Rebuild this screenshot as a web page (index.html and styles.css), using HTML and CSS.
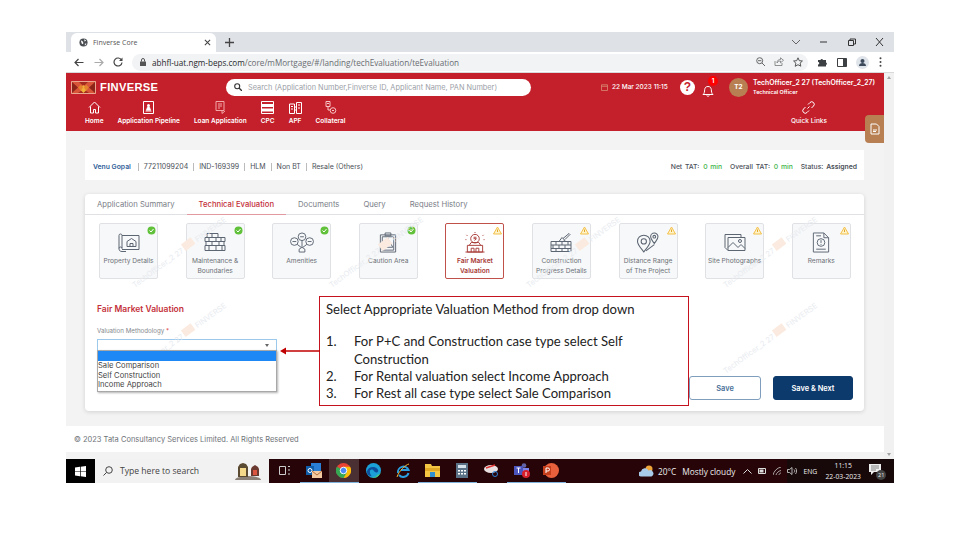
FILE: index.html
```html
<!DOCTYPE html>
<html lang="en">
<head>
  <meta charset="UTF-8">
  <title>Finverse Core</title>
  <link rel="stylesheet" href="styles.css">
</head>
<body>
<div class="shot">

  <!-- browser tabs -->
  <div class="tabstrip">
    <div class="tab">
      <svg class="globe" width="9" height="9" viewBox="0 0 10 10"><circle cx="5" cy="5" r="4.5" fill="#4a4d52"/><path d="M2 2.5l2 1 1 2-1 1.500-1-1zM6 1l2 2-2 1zM6.500 6l2 .5-2 2z" fill="#fff"/></svg>
      <span class="tab-title">Finverse Core</span>
      <svg width="7" height="7" viewBox="0 0 8 8"><path d="M1 1l6 6M7 1L1 7" stroke="#444" stroke-width="1.200"/></svg>
    </div>
    <svg class="plus" width="9" height="9" viewBox="0 0 9 9"><path d="M4.500 0v9M0 4.500h9" stroke="#444" stroke-width="1.300"/></svg>
    <div class="win-btns">
      <svg width="10" height="8" viewBox="0 0 10 8"><path d="M1 2l4 4 4-4" fill="none" stroke="#666"/></svg>
      <svg width="10" height="8" viewBox="0 0 10 8"><path d="M1 4h7" stroke="#333"/></svg>
      <svg width="10" height="8" viewBox="0 0 10 8"><path d="M1.500 2.500h5v5h-5zM3 2.500V1h5.500v5H6.500" fill="none" stroke="#333"/></svg>
      <svg width="10" height="8" viewBox="0 0 10 8"><path d="M1 0l7 8M8 0L1 8" stroke="#333"/></svg>
    </div>
  </div>

  <!-- browser toolbar -->
  <div class="toolbar">
    <svg class="nav-back" width="10" height="9" viewBox="0 0 10 9"><path d="M9.500 4.500H1M4.500 1L1 4.500 4.500 8" fill="none" stroke="#444" stroke-width="1.200"/></svg>
    <svg class="nav-fwd" width="10" height="9" viewBox="0 0 10 9"><path d="M.5 4.500H9M5.500 1L9 4.500 5.500 8" fill="none" stroke="#aaa" stroke-width="1.200"/></svg>
    <svg class="nav-reload" width="10" height="10" viewBox="0 0 10 10"><path d="M8.500 3A4 4 0 1 0 9 5.500" fill="none" stroke="#444" stroke-width="1.200"/><path d="M9.500 .5v3.500H6z" fill="#444"/></svg>
    <div class="urlbar">
      <svg width="6" height="8" viewBox="0 0 6 8"><path d="M0 3.500h6V8H0z" fill="#555"/><path d="M1.500 3.500V2a1.500 1.500 0 0 1 3 0v1.500" fill="none" stroke="#555"/></svg>
      <span class="url"><b>abhfl-uat.ngm-beps.com</b>/core/mMortgage/#/landing/techEvaluation/teEvaluation</span>
      <div class="url-icons">
        <svg width="9" height="9" viewBox="0 0 9 9"><circle cx="3.700" cy="3.700" r="3" fill="none" stroke="#666"/><path d="M6 6l3 3M2 3.700h3.400" stroke="#666"/></svg>
        <svg width="10" height="9" viewBox="0 0 10 9"><path d="M1 4v4.500h7V6M3 6c0-3 2-3.500 3.500-3.500V.8L9.500 3.300 6.500 5.800V4C5 4 3.800 4.500 3 6z" fill="none" stroke="#777" stroke-width=".8"/></svg>
        <svg width="10" height="10" viewBox="0 0 10 10"><path d="M5 .8l1.300 2.900 3.100.3-2.300 2.100.7 3.100L5 7.700 2.200 9.300l.7-3.100L.6 4l3.100-.3z" fill="none" stroke="#555"/></svg>
      </div>
    </div>
    <div class="ext-icons">
      <svg width="10" height="10" viewBox="0 0 10 10"><path d="M1 3h2.500a1.300 1.300 0 0 1 2.500 0H9v2.500a1.300 1.300 0 0 1 0 2.500V9.500H1V7.500a1.200 1.200 0 0 0 0-2.500z" fill="#3c4043"/></svg>
      <svg width="10" height="9" viewBox="0 0 10 9"><path d="M.5.500h9v8h-9z" fill="none" stroke="#3c4043"/><path d="M6 .5h3.500v8H6z" fill="#3c4043"/></svg>
      <svg width="13" height="13" viewBox="0 0 13 13"><circle cx="6.500" cy="6.500" r="6.500" fill="#dfe3ea"/><circle cx="6.500" cy="5" r="2" fill="#3c4a5c"/><path d="M3 10c0-2 1.500-3 3.500-3s3.500 1 3.500 3z" fill="#3c4a5c"/></svg>
      <svg width="3" height="10" viewBox="0 0 3 10"><circle cx="1.500" cy="1.300" r="1" fill="#444"/><circle cx="1.500" cy="5" r="1" fill="#444"/><circle cx="1.500" cy="8.700" r="1" fill="#444"/></svg>
    </div>
  </div>

  <div class="viewport">
    <div class="app">

      <header class="topbar">
        <div class="top-row">
          <svg class="logo" width="25" height="13" viewBox="0 0 25 13"><path d="M0 0h25v13H0z" fill="#d8553a"/><path d="M1 1l6 5.500L1 12zM24 1l-6 5.500 6 5.500z" fill="#8c2419"/><path d="M12.500 5L8 1h9zM12.500 8L7 12h11z" fill="#a32a1c"/><path d="M12.500 4l4 4-4 4-4-4z" fill="#f0b03a"/><path d="M7 6.500l3-3 2 3-2 3zM18 6.500l-3-3-2 3 2 3z" fill="#e5822d"/><path d="M.5.500h24v12H.5z" fill="none" stroke="#e9a58e"/></svg>
          <span class="brand">FINVERSE</span>
          <div class="search">
            <svg width="8" height="8" viewBox="0 0 8 8"><circle cx="3.200" cy="3.200" r="2.500" fill="none" stroke="#333" stroke-width="1.100"/><path d="M5 5l3 3" stroke="#333" stroke-width="1.300"/></svg>
            <span>Search (Application Number,Finverse ID, Applicant Name, PAN Number)</span>
          </div>
          <div class="top-right">
            <svg class="cal" width="7" height="7" viewBox="0 0 7 7"><path d="M.5.800h6v5.700h-6zM.5 2.300h6" fill="none" stroke="#d98a74" stroke-width=".8"/></svg>
            <span class="date">22 Mar 2023 11:15</span>
            <span class="help">?</span>
            <div class="bell">
              <svg width="12" height="13" viewBox="0 0 12 13"><path d="M1 10.500c1.500-1 1.500-3 1.700-5C3 3.500 4 2.500 6 2.500s3 1 3.300 3c.2 2 .2 4 1.700 5zM4.800 11.500a1.300 1.300 0 0 0 2.400 0" fill="none" stroke="#fff"/></svg>
              <span class="badge">1</span>
            </div>
            <span class="avatar">T2</span>
            <div class="user">
              <div class="user-name">TechOfficer_2 27 (TechOfficer_2_27)</div>
              <div class="user-role">Technical Officer</div>
            </div>
          </div>
        </div>
        <nav class="menu">
          <a class="menu-item">
            <svg width="13" height="13" viewBox="0 0 13 13"><path d="M1 6.500L6.500 1 12 6.500M2.500 5.500V12h3V8.500h2V12h3V5.500" fill="none" stroke="#fff"/></svg>
            Home
          </a>
          <a class="menu-item">
            <svg width="11" height="13" viewBox="0 0 11 13"><path d="M.5.500h10v12H.5z" fill="none" stroke="#fff"/><circle cx="5.500" cy="4.500" r="1.500" fill="#fff"/><path d="M3 9.500L4.500 6h2L8 9.500zM2.500 10.500h6" fill="#fff" stroke="#fff" stroke-width=".5"/></svg>
            Application Pipeline
          </a>
          <a class="menu-item">
            <svg width="11" height="13" viewBox="0 0 11 13"><path d="M1 .5h8v9H1zM3 3h4M3 5h4M3 7h2M7 9.500v3l3-2.500" fill="none" stroke="#f0a8a8"/></svg>
            Loan Application
          </a>
          <a class="menu-item">
            <svg width="13" height="13" viewBox="0 0 13 13"><path d="M.5.500h12v12H.5z" fill="none" stroke="#fff"/><path d="M.5 3h12v3H.5zM.5 7.500h12v3H.5z" fill="#fff"/></svg>
            CPC
          </a>
          <a class="menu-item">
            <svg width="13" height="13" viewBox="0 0 13 13"><path d="M.5 3h5v9.500h-5zM7.500 1.500h5v11h-5zM5.500 6h2M5.500 9h2M2 5.500h2M2 8h2M9 4h2M9 7h2" fill="none" stroke="#fff"/></svg>
            APF
          </a>
          <a class="menu-item">
            <svg width="13" height="13" viewBox="0 0 13 13"><path d="M2 .5h4v5H2zM3 2.500h2M4 5.500V9h2" fill="none" stroke="#f6c6c6"/><circle cx="9" cy="9.500" r="2.800" fill="none" stroke="#f6c6c6"/><path d="M8 9.500h2" stroke="#f6c6c6"/></svg>
            Collateral
          </a>
          <a class="menu-item quick">
            <svg width="13" height="13" viewBox="0 0 13 13"><path d="M5.500 7.500l2-2M6 3.500L8 1.500a2.400 2.400 0 0 1 3.500 3.500l-2 2M7 9.500L5 11.500A2.400 2.400 0 0 1 1.500 8l2-2" fill="none" stroke="#fff"/></svg>
            Quick Links
          </a>
        </nav>
      </header>

      <main class="content">
        <section class="summary">
          <div class="crumbs">
            <b>Venu Gopal</b><span>77211099204</span><span>IND-169399</span><span>HLM</span><span>Non BT</span><span>Resale (Others)</span>
          </div>
          <div class="tat">
            Net TAT: <em>0 min</em> Overall TAT: <em>0 min</em> Status: <strong>Assigned</strong>
          </div>
        </section>

        <section class="card">
          <div class="tabs">
            <a>Application Summary</a>
            <a class="on">Technical Evaluation</a>
            <a>Documents</a>
            <a>Query</a>
            <a>Request History</a>
          </div>

          <div class="tiles">
            <div class="tile">
              <svg class="done" viewBox="0 0 9 9"><circle cx="4.500" cy="4.500" r="4" fill="#62c13a"/><path d="M2.500 4.500l1.500 1.500 2.500-3" fill="none" stroke="#fff"/></svg>
              <svg class="tile-ico" viewBox="0 0 22 20"><path d="M1 3a1.500 1.500 0 0 1 3 0v13a1.500 1.500 0 0 0-3 0zM4 3h17v14H4M1 16c0 2 1 3 3 3h4" fill="none"/><path d="M9 14V9l4.500-3L18 9v5zM12 14v-3h3v3" fill="none"/></svg>
              <span>Property Details</span>
            </div>
            <div class="tile">
              <svg class="done" viewBox="0 0 9 9"><circle cx="4.500" cy="4.500" r="4" fill="#62c13a"/><path d="M2.500 4.500l1.500 1.500 2.500-3" fill="none" stroke="#fff"/></svg>
              <svg class="tile-ico" viewBox="0 0 22 20"><path d="M3 1h11v4h7v4h-1v4h1v5H1v-5h1V9H1V5h2zM1 5h13M1 9h20M1 13h20M8 1v4M5 5v4M12 5v4M17 5v4M8 9v4M15 9v4M5 13v5M12 13v5M18 13v5" fill="none"/></svg>
              <span>Maintenance &amp; Boundaries</span>
            </div>
            <div class="tile">
              <svg class="done" viewBox="0 0 9 9"><circle cx="4.500" cy="4.500" r="4" fill="#62c13a"/><path d="M2.500 4.500l1.500 1.500 2.500-3" fill="none" stroke="#fff"/></svg>
              <svg class="tile-ico wide" viewBox="0 0 26 22"><circle cx="5" cy="10" r="4"/><circle cx="13" cy="5" r="4"/><circle cx="21" cy="10" r="4"/><path d="M3 10h4M11 5h4M19 10h4M8 13l4 3M13 9v7M18 13l-4 3M10 21v-3l3-2 3 2v3z"/></svg>
              <span>Amenities</span>
            </div>
            <div class="tile">
              <svg class="done" viewBox="0 0 9 9"><circle cx="4.500" cy="4.500" r="4" fill="#62c13a"/><path d="M2.500 4.500l1.500 1.500 2.500-3" fill="none" stroke="#fff"/></svg>
              <svg class="tile-ico" viewBox="0 0 22 22"><path d="M3 3h16v18H3zM8 1h6v3H8zM5 5h12v14H5zM11 7l5 9H6zM11 10.500v3"/></svg>
              <span>Caution Area</span>
            </div>
            <div class="tile active">
              <svg class="warn" viewBox="0 0 9 9"><path d="M4.500 1L8.500 8h-8z" fill="#fff3c9" stroke="#f3c14b"/><path d="M4.500 3.500V6" stroke="#e2a82c"/></svg>
              <svg class="tile-ico red" viewBox="0 0 22 22"><circle cx="11" cy="7" r="4.500"/><path d="M9.500 5.500h3M9.500 7h3M10.500 9l2-2M3 21v-7h16v7zM1 21h20M5 14l2-3h8l2 3M7 21v-4h3v4M12 21v-4h3v4M2 3l1 1M20 3l-1 1M11 0v1M1 8h1M20 8h1"/></svg>
              <span>Fair Market Valuation</span>
            </div>
            <div class="tile">
              <svg class="warn" viewBox="0 0 9 9"><path d="M4.500 1L8.500 8h-8z" fill="#fff3c9" stroke="#f3c14b"/><path d="M4.500 3.500V6" stroke="#e2a82c"/></svg>
              <svg class="tile-ico" viewBox="0 0 22 20"><path d="M1 9h20v10H1zM1 12.500h20M1 16h20M6 9v3.500M12 9v3.500M18 9v3.500M3 12.500V16M9 12.500V16M15 12.500V16M6 16v3M12 16v3M18 16v3M9 9l3-4 3 3-2 1M13 6l6-5 1 1-5 5" fill="none"/></svg>
              <span>Construction Progress Details</span>
            </div>
            <div class="tile">
              <svg class="warn" viewBox="0 0 9 9"><path d="M4.500 1L8.500 8h-8z" fill="#fff3c9" stroke="#f3c14b"/><path d="M4.500 3.500V6" stroke="#e2a82c"/></svg>
              <svg class="tile-ico wide" viewBox="0 0 24 20"><path d="M8 19c-3-4-6-7-6-10a6 6 0 0 1 12 0c0 3-3 6-6 10z"/><circle cx="8" cy="9" r="2.500"/><path d="M18 11c-2-3-3.500-4.500-3.500-6.500a3.500 3.500 0 0 1 7 0c0 2-1.500 3.500-3.500 6.500zM10 18l8-6"/><circle cx="18" cy="4.500" r="1.300"/></svg>
              <span>Distance Range of The Project</span>
            </div>
            <div class="tile">
              <svg class="warn" viewBox="0 0 9 9"><path d="M4.500 1L8.500 8h-8z" fill="#fff3c9" stroke="#f3c14b"/><path d="M4.500 3.500V6" stroke="#e2a82c"/></svg>
              <svg class="tile-ico" viewBox="0 0 22 20"><path d="M1 2h16v3M1 2v13l3 3M4 5h17v13H4zM4 15l5-5 5 5 3-3 4 4"/><circle cx="16" cy="8.500" r="1.500"/></svg>
              <span>Site Photographs</span>
            </div>
            <div class="tile">
              <svg class="warn" viewBox="0 0 9 9"><path d="M4.500 1L8.500 8h-8z" fill="#fff3c9" stroke="#f3c14b"/><path d="M4.500 3.500V6" stroke="#e2a82c"/></svg>
              <svg class="tile-ico" viewBox="0 0 20 22"><path d="M2 1h11l5 5v15H2zM13 1v5h5M5 4h5M5 18h10"/><circle cx="10" cy="11" r="4"/><path d="M10 8.500v3M10 12.500v1"/></svg>
              <span>Remarks</span>
            </div>
          </div>

          <div class="form">
            <div class="form-left">
              <h3>Fair Market Valuation</h3>
              <label>Valuation Methodology <i>*</i></label>
              <div class="select"><span class="caret"></span></div>
            </div>
            <div class="actions">
              <button type="button" class="btn">Save</button>
              <button type="button" class="btn primary">Save &amp; Next</button>
            </div>
          </div>

          <div class="wm-layer">
            <span class="wm">TechOfficer_2 27 <u></u> FINVERSE</span>
            <span class="wm">TechOfficer_2 27 <u></u> FINVERSE</span>
            <span class="wm">TechOfficer_2 27 <u></u> FINVERSE</span>
            <span class="wm">TechOfficer_2 27 <u></u> FINVERSE</span>
            <span class="wm">TechOfficer_2 27 <u></u> FINVERSE</span>
            <span class="wm">TechOfficer_2 27 <u></u> FINVERSE</span>
            <span class="wm">TechOfficer_2 27 <u></u> FINVERSE</span>
            <span class="wm">TechOfficer_2 27 <u></u> FINVERSE</span>
          </div>

          <!-- list of the open select -->
          <ul class="options">
            <li class="picked"></li>
            <li>Sale Comparison</li>
            <li>Self Construction</li>
            <li>Income Approach</li>
          </ul>
        </section>
      </main>

      <footer class="page-foot">© 2023 Tata Consultancy Services Limited. All Rights Reserved</footer>
    </div>

    <div class="scrollbar"><i class="up"></i><i class="down"></i></div>

    <div class="side-tab">
      <svg width="10" height="12" viewBox="0 0 10 12"><path d="M1 1h5.500L9 3.500V11H1zM3 7h4M3 8.500h3" fill="none" stroke="#fff"/></svg>
    </div>
  </div>

  <!-- windows taskbar -->
  <div class="taskbar">
    <div class="start">
      <svg width="11" height="11" viewBox="0 0 11 11"><path d="M0 1.500L5 .8v4.400H0zM5.700.7L11 0v5.200H5.700zM0 5.800h5v4.400l-5-.7zM5.700 5.800H11V11l-5.300-.7z" fill="#fff"/></svg>
    </div>
    <div class="tb-search">
      <svg width="10" height="10" viewBox="0 0 10 10"><circle cx="6" cy="4" r="3.300" fill="none" stroke="#444"/><path d="M3.500 6.500L.5 9.500" stroke="#444"/></svg>
      <span>Type here to search</span>
      <svg class="lanterns" width="26" height="17" viewBox="0 0 26 17"><ellipse cx="13" cy="17" rx="13" ry="4" fill="#8a8078"/><path d="M5 1l3-1 3 1 2 3v10H3V4z" fill="#5b4a32"/><path d="M5 5h6v8H5z" fill="#f5d98a"/><path d="M17 4l3-2 3 2 1 2v7h-8V6z" fill="#6a3a30"/><path d="M18 7h4v5h-4z" fill="#d9553f"/></svg>
    </div>
    <div class="tb-apps">
      <div class="app-slot">
        <svg width="11" height="9" viewBox="0 0 11 9"><path d="M.5.500h6v8h-6zM9 .5h2M9 4h2M9 8h2" fill="none" stroke="#ccc"/></svg>
      </div>
      <div class="app-slot open">
        <svg width="16" height="15" viewBox="0 0 16 15"><path d="M5 0h10v8H5z" fill="#2a7fd5"/><path d="M0 3h8v9H0z" fill="#0f5ca8"/><circle cx="4" cy="7.500" r="2" fill="none" stroke="#fff"/><path d="M6 8h10v7H6z" fill="#f4c9a0"/><path d="M6 8l5 4 5-4" fill="none" stroke="#b5703e"/></svg>
      </div>
      <div class="app-slot open current">
        <svg width="15" height="15" viewBox="0 0 16 16"><circle cx="8" cy="8" r="8" fill="#ea4335"/><path d="M8 16a8 8 0 0 0 7-12H8z" fill="#fbbc05"/><path d="M1 4a8 8 0 0 0 7 12l3.500-6L5 6z" fill="#34a853"/><circle cx="8" cy="8" r="3.500" fill="#4a8af4" stroke="#fff"/></svg>
      </div>
      <div class="app-slot">
        <svg width="15" height="15" viewBox="0 0 16 16"><circle cx="8" cy="8" r="8" fill="#1ba0d8"/><path d="M1 9c1-5 8-6 11-3 2 2 1 4-1 4-3 0-2-3-5-3-2 0-3 3 0 7-3 0-5-2-5-5z" fill="#0d4f9c"/><path d="M16 9a8 8 0 0 1-10 6.500c4 0 6-2 6-3 2 .5 3-1.500 4-3.500z" fill="#4fd26a"/></svg>
      </div>
      <div class="app-slot">
        <svg width="14" height="15" viewBox="0 0 14 15"><path d="M2 10a5.500 5.500 0 0 1 10.500-3H5" fill="none" stroke="#2a9fe0" stroke-width="2"/><path d="M12.500 10a5.500 5.500 0 0 1-9.500 2" fill="none" stroke="#2a9fe0" stroke-width="2"/><path d="M1 14C3 8 9 2 13 1" fill="none" stroke="#f2b632"/></svg>
      </div>
      <div class="app-slot open">
        <svg width="15" height="13" viewBox="0 0 15 13"><path d="M0 0h6l1 2h8v11H0z" fill="#f4c542"/><path d="M0 4h15v3H0z" fill="#e0a825"/><path d="M5 8h5v5H5z" fill="#2f8fd0"/></svg>
      </div>
      <div class="app-slot open">
        <svg width="12" height="15" viewBox="0 0 12 15"><path d="M0 0h12v15H0z" fill="#5b7286"/><path d="M2 2h8v3H2z" fill="#d5e2ec"/><path d="M2 7h2v1.500H2zM5 7h2v1.500H5zM8 7h2v1.500H8zM2 10h2v1.500H2zM5 10h2v1.500H5zM8 10h2v1.500H8z" fill="#fff"/></svg>
      </div>
      <div class="app-slot">
        <svg width="15" height="13" viewBox="0 0 15 13"><ellipse cx="7" cy="5" rx="7" ry="4" fill="#e8e0e0"/><path d="M2 4l9-3" stroke="#d33" stroke-width="1.500"/><circle cx="11" cy="10" r="2.500" fill="none" stroke="#2a7fd5"/></svg>
      </div>
      <div class="app-slot open">
        <svg width="16" height="15" viewBox="0 0 16 15"><circle cx="10" cy="2.500" r="2.300" fill="#6264a7"/><path d="M6 5h9v6H6z" fill="#7b83eb"/><path d="M0 3h9v9H0z" fill="#4b53bc"/><path d="M2.500 5h4M4.500 5v5" stroke="#fff"/><circle cx="12" cy="11" r="4" fill="#d61f2b"/><path d="M12 9v4" stroke="#fff"/></svg>
      </div>
      <div class="app-slot open">
        <svg width="16" height="15" viewBox="0 0 16 15"><circle cx="8.500" cy="7.500" r="7.500" fill="#e8603c"/><path d="M0 3h8v9H0z" fill="#c43e1c"/><path d="M3 10V5h2a1.300 1.300 0 0 1 0 3H3" fill="none" stroke="#fff"/></svg>
      </div>
    </div>
    <div class="tb-weather">
      <svg width="15" height="12" viewBox="0 0 15 12"><circle cx="10" cy="4" r="3.500" fill="#eea63a"/><path d="M2 11.500a2.500 2.500 0 0 1 0-5 4 4 0 0 1 7.500-1 3 3 0 0 1 3 6z" fill="#a9cbea"/></svg>
      <span class="temp">20°C</span>
      <span>Mostly cloudy</span>
    </div>
    <div class="tray">
      <svg width="9" height="5" viewBox="0 0 9 5"><path d="M.5 4.500l4-4 4 4" fill="none" stroke="#ddd"/></svg>
      <svg width="9" height="6" viewBox="0 0 9 6"><path d="M.5.500h7v5h-7z" fill="none" stroke="#ddd"/><path d="M1.500 1.500h4v3h-4z" fill="#ddd"/></svg>
      <svg width="9" height="8" viewBox="0 0 9 8"><path d="M0 8C1 4 4 1 8 0M3 8c.5-2 2.500-4 5-4.500M6 8c0-1 1-2 2-2" fill="none" stroke="#ccc" stroke-width=".8"/></svg>
    </div>
    <div class="tray-end">
      <svg width="10" height="8" viewBox="0 0 10 8"><path d="M.5 2.500h2L5 .5v7L2.500 5.500h-2zM7 2.500c1 1 1 2 0 3M8.500 1c1.500 2 1.500 4 0 6" fill="none" stroke="#ddd" stroke-width=".8"/></svg>
      <span class="lang">ENG</span>
      <div class="clock"><div>11:15</div><div>22-03-2023</div></div>
      <div class="notif">
        <svg width="13" height="12" viewBox="0 0 13 12"><path d="M0 0h12v8H5L2 11V8H0z" fill="#eee"/><path d="M2 2h8M2 4h8M2 6h5" stroke="#555" stroke-width=".7"/></svg>
        <span>21</span>
      </div>
    </div>
  </div>
</div>

<!-- note pasted over the screenshot -->
<div class="note">
  <p>Select Appropriate Valuation Method from drop down</p>
  <ol>
    <li><span>1.</span><span>For P+C and Construction case type select Self Construction</span></li>
    <li><span>2.</span><span>For Rental valuation select Income Approach</span></li>
    <li><span>3.</span><span>For Rest all case type select Sale Comparison</span></li>
  </ol>
</div>
<svg class="note-arrow" width="40" height="8" viewBox="0 0 40 8"><path d="M5 4h35" stroke="#c00000" stroke-width="1.500"/><path d="M0 4l6-3.500v7z" fill="#c00000"/></svg>
</body>
</html>
```

FILE: styles.css
```css
* { box-sizing: border-box; }
html, body { margin: 0; height: 100%; }
body { background: #fff; font-family: "Inter", "Liberation Sans", sans-serif; overflow: hidden; position: relative; }

.shot { width: 828px; height: 451px; margin: 32px 0 0 66px; display: flex; flex-direction: column; }

/* browser */
.tabstrip { height: 20px; background: #dee1e6; display: flex; align-items: flex-end; padding-left: 5px; }
.tab { width: 145px; height: 19px; background: #fff; border-radius: 6px 6px 0 0; display: flex; align-items: center; padding: 0 5px 0 8px; }
.tab-title { flex: 1; margin-left: 5px; font: 7px "Open Sans", sans-serif; color: #555; }
.plus { margin: 0 0 5px 9px; }
.win-btns { margin-left: auto; height: 19px; width: 103px; padding: 0 9px 2px 0; display: flex; align-items: center; justify-content: space-between; }

.toolbar { height: 21px; background: #fff; display: flex; align-items: center; border-bottom: 1px solid #d9d9d9; }
.nav-back { margin-left: 8px; }
.nav-fwd { margin-left: 10px; }
.nav-reload { margin-left: 9px; }
.urlbar { width: 676px; height: 17px; margin-left: 9px; background: #f1f3f4; border-radius: 9px; display: flex; align-items: center; padding: 0 5px 0 8px; }
.url { margin-left: 6px; font: 8.15px "Open Sans", sans-serif; color: #6a6d72; white-space: nowrap; }
.url b { font-weight: 400; color: #26282b; }
.url-icons { margin-left: auto; width: 47px; display: flex; justify-content: space-between; }
.ext-icons { flex: 1; display: flex; align-items: center; justify-content: space-between; padding: 0 12px 0 9px; }

.viewport { flex: 1; display: flex; position: relative; min-height: 0; }
.app { width: 818px; flex: none; display: flex; flex-direction: column; background: #f3f3f3; }

/* app header */
.topbar { height: 58px; background: #c4202b; color: #fff; display: flex; flex-direction: column; }
.top-row { display: flex; align-items: center; height: 28px; padding: 0 8px 0 5px; }
.logo { flex: none; }
.brand { margin-left: 4px; font: 700 11.2px "Liberation Sans", sans-serif; letter-spacing: .3px; width: 126px; }
.search { width: 305px; height: 17px; background: #fff; border-radius: 9px; display: flex; align-items: center; padding: 0 8px; font-size: 7.35px; color: #9a9ea6; white-space: nowrap; }
.search span { margin-left: 6px; }
.top-right { flex: 1; display: flex; align-items: center; padding-left: 70px; }
.date { margin-left: 4px; font-size: 6.5px; font-weight: 500; width: 68px; white-space: nowrap; }
.help { width: 15px; height: 15px; border-radius: 50%; background: #fff; color: #c4202b; font: 700 12px/15px "Liberation Sans", sans-serif; text-align: center; }
.bell { position: relative; margin-left: 7px; width: 13px; height: 13px; }
.badge { position: absolute; left: 6px; top: -5px; width: 10px; height: 10px; border-radius: 50%; background: #f00; font: 700 6px/10px "Inter", sans-serif; text-align: center; }
.avatar { margin-left: 14px; flex: none; width: 19px; height: 19px; border-radius: 50%; background: #b87f52; font: 700 6.5px/19px "Inter", sans-serif; text-align: center; }
.user { margin-left: 5px; white-space: nowrap; }
.user-name { font-size: 6.9px; font-weight: 600; line-height: 9px; }
.user-role { font-size: 5.4px; font-weight: 600; line-height: 10px; }

.menu { display: flex; gap: 14px; padding-left: 19px; }
.menu-item { display: flex; flex-direction: column; align-items: center; gap: 3px; font-size: 6.5px; font-weight: 600; white-space: nowrap; }
.menu-item.quick { margin-left: auto; margin-right: 57px; font-weight: 500; }

/* page */
.content { flex: 1; padding: 19px 20px 15px 19px; display: flex; flex-direction: column; gap: 14px; }
.summary { height: 30px; background: #fff; display: flex; align-items: center; justify-content: space-between; padding: 3px 7px 0 8px; font-size: 7px; color: #4a4f57; white-space: nowrap; }
.crumbs { display: flex; align-items: center; }
.crumbs b { color: #2f6098; font-weight: 600; padding-right: 7px; font-size: 6.8px; }
.crumbs span { border-left: 1px solid #bbb; padding: 0 5px; line-height: 8px; }
.tat { font-size: 6.8px; font-weight: 500; word-spacing: 1px; }
.tat em { font-style: normal; color: #3fb54a; margin: 0 5px 0 1px; }
.tat strong { font-weight: 600; }

.card { flex: 1; background: #fff; border-radius: 4px; box-shadow: 0 1px 4px rgba(0,0,0,.14); position: relative; overflow: hidden; display: flex; flex-direction: column; }
.tabs { height: 21px; border-bottom: 1px solid #dfe1e4; display: flex; font-size: 7.7px; color: #7b8087; white-space: nowrap; }
.tabs a { padding: 6px 12px 0; }
.tabs a.on { color: #c4303a; font-weight: 500; border-bottom: 1px solid #e29aa0; height: 21px; }

.tiles { display: flex; gap: 27.6px; padding: 8px 0 0 14px; }
.tile { position: relative; flex: none; width: 59px; height: 56px; background: #f7f8f9; border: 1px solid #dfe1e4; border-radius: 2px; display: flex; flex-direction: column; align-items: center; padding: 8px 0 0; font-size: 6.6px; line-height: 10px; color: #6c7178; text-align: center; }
.tile span { display: block; margin-top: 3px; padding: 0 1px; }
.tile.active { border-color: #c0504a; background: #fff; color: #a83c38; font-weight: 600; }
.tile-ico { width: 22px; height: 21px; flex: none; fill: none; stroke: #5c6673; stroke-width: 1; }
.tile-ico.wide { width: 26px; }
.tile-ico.red { stroke: #a83c38; }
.done, .warn { position: absolute; top: 2px; right: 1px; width: 9px; height: 9px; }

.form { flex: 1; display: flex; justify-content: space-between; padding: 0 11px 0 12px; }
.form-left { width: 180px; padding-top: 24px; }
h3 { margin: 0; font-size: 8.5px; line-height: 12px; font-weight: 600; color: #c4303a; }
label { display: block; margin-top: 12px; font-size: 6.2px; line-height: 8px; color: #83878d; }
label i { color: #d33; font-style: normal; }
.select { position: relative; height: 12px; margin-top: 4px; border: 1px solid #9cc8ec; background: #fff; }
.caret { position: absolute; right: 7px; top: 4px; border: 2px solid transparent; border-top: 3px solid #666; }
.actions { display: flex; gap: 12px; align-items: flex-end; padding-bottom: 11px; }
.btn { width: 72px; height: 24px; border: 1px solid #7f9ebd; border-radius: 3px; background: #fff; color: #4a6f98; font: 600 7.4px "Inter", sans-serif; }
.btn.primary { width: 80px; background: #0d3a6c; border-color: #0d3a6c; color: #fff; }

.options { position: absolute; z-index: 2; left: 12px; top: 156px; width: 180px; margin: 0; padding: 0 0 1px; list-style: none; background: #fff; border: 1px solid #a8a8a8; box-shadow: 1px 1px 2px rgba(0,0,0,.3); font-size: 7.6px; line-height: 9.5px; color: #444; }
.options li { height: 9.5px; white-space: nowrap; }
.options li.picked { background: #1e88f5; height: 10px; }

.wm-layer { position: absolute; z-index: 1; inset: 15px 0 0 -5px; display: grid; grid-template-columns: repeat(4, 197px); grid-auto-rows: 86px; pointer-events: none; }
.wm { justify-self: center; align-self: center; transform: rotate(-36deg); font-size: 7.6px; color: #e8ebf0; white-space: nowrap; }
.wm u { display: inline-block; width: 12px; height: 8px; background: #fbeadf; text-decoration: none; }

.page-foot { height: 26px; margin-bottom: 7px; background: #fff; padding: 9px 0 0 8px; font-size: 7.5px; line-height: 9px; color: #6e7277; }

.scrollbar { flex: 1; background: #f1f1f1; position: relative; }
.scrollbar i { position: absolute; left: 3px; border: 2.5px solid transparent; }
.scrollbar i.up { top: 1px; border-bottom: 3px solid #a3a3a3; }
.scrollbar i.down { bottom: 1px; border-top: 3px solid #a3a3a3; }

.side-tab { position: absolute; left: 799px; top: 42px; width: 19px; height: 28px; background: #b87f52; border-radius: 4px 0 0 4px; display: flex; align-items: center; justify-content: center; }

/* taskbar */
.taskbar { height: 24px; flex: none; background: #260407; display: flex; align-items: center; color: #eee; font: 8px "Open Sans", sans-serif; }
.start { flex: none; width: 29px; height: 100%; background: #000; display: flex; align-items: center; justify-content: center; }
.tb-search { flex: none; width: 174px; height: 100%; background: #f2f2f2; color: #444; display: flex; align-items: center; padding-left: 8px; font-size: 8.6px; position: relative; overflow: hidden; }
.tb-search span { margin-left: 7px; }
.lanterns { position: absolute; left: 140px; top: 4px; }
.tb-apps { flex: none; display: flex; height: 100%; margin-left: 1px; }
.app-slot { width: 29.6px; height: 100%; display: flex; align-items: center; justify-content: center; border-bottom: 1px solid transparent; }
.app-slot.open { border-bottom-color: #7fb2dc; }
.app-slot.current { background: #4a3032; }
.tb-weather { flex: none; margin-left: 73px; display: flex; align-items: center; gap: 4px; white-space: nowrap; font-size: 8.3px; }
.temp { margin-right: 2px; }
.tray { flex: none; margin-left: 8px; display: flex; align-items: center; gap: 6px; }
.tray-end { flex: 1; height: 100%; margin-left: 5px; background: #17090a; display: flex; align-items: center; }
.tray-end svg { flex: none; }
.lang { font-size: 6.8px; margin-left: 6px; }
.clock { width: 50px; text-align: center; font-size: 6.8px; line-height: 11px; margin-left: 1px; }
.notif { position: relative; margin-left: 1px; width: 15px; height: 14px; }
.notif span { position: absolute; right: -2px; bottom: -2px; width: 10px; height: 10px; border-radius: 50%; background: #444; font-size: 5.5px; line-height: 10px; text-align: center; }

/* callout */
.note { position: absolute; z-index: 3; left: 319px; top: 296px; width: 370px; height: 110px; background: #fff; border: 1.5px solid #c5121f; padding: 4px 6px 0; font: 13.1px/17.3px "Lato", sans-serif; color: #222; }
.note p { margin: 0 0 15px; }
.note ol { margin: 0; padding: 0; list-style: none; }
.note li { display: flex; }
.note li span:first-child { flex: none; width: 28px; }
.note-arrow { position: absolute; z-index: 3; left: 280px; top: 347px; }
```
